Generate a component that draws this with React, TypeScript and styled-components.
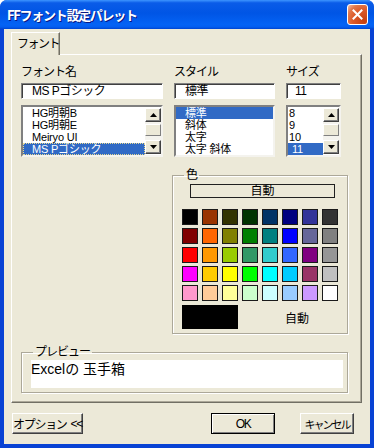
import React from "react";
import styled, { createGlobalStyle } from "styled-components";

const UI = `"Liberation Sans", "Noto Sans CJK JP", sans-serif`;

const GlobalStyle = createGlobalStyle`
  html, body { margin: 0; padding: 0; background: #ffffff; }
  body { font-family: ${UI}; }
  * { box-sizing: border-box; }
  fieldset { margin: 0; min-width: 0; }
`;

const Window = styled.div`
  width: 374px;
  height: 448px;
  display: flex;
  flex-direction: column;
  background: #0842d4;
  border-radius: 7px 7px 0 0;
  overflow: hidden;
`;

const TitleBar = styled.div`
  flex: none;
  height: 29px;
  display: flex;
  align-items: center;
  justify-content: space-between;
  padding: 0 6px 0 7px;
  background: linear-gradient(180deg, #3d95ff 0%, #0a5ce8 10%, #0055e5 45%, #0463f5 85%, #035ef0 93%, #0044d0 100%);
`;

const Title = styled.span`
  color: #ffffff;
  font: bold 13px "Noto Sans CJK JP", sans-serif;
  letter-spacing: -1.3px;
  line-height: 16px;
  text-shadow: 1px 1px 0 #0a1883;
`;

const CloseButton = styled.div`
  width: 21px;
  height: 21px;
  border: 1px solid #ffffff;
  border-radius: 3px;
  background: radial-gradient(circle at 85% 85%, #c43f10 0%, #dc5a2a 50%, #e2774a 75%, #f4b194 95%);
  display: flex;
  align-items: center;
  justify-content: center;
`;

const Body = styled.div`
  flex: 1;
  margin: 0 4px 4px;
  background: #ece9d8;
  display: flex;
  flex-direction: column;
  padding: 3px 8px 10px 7px;
`;

const TabStrip = styled.div`
  height: 23px;
  margin-bottom: -1px;
  display: flex;
  position: relative;
  z-index: 1;
`;

const Tab = styled.div`
  width: 49px;
  height: 23px;
  background: #ece9d8;
  border: 1px solid;
  border-color: #ffffff #716f64 transparent #ffffff;
  border-bottom: none;
  box-shadow: inset -1px 0 0 #aca899;
  font-size: 12px;
  letter-spacing: -1.5px;
  padding: 3px 0 0 5px;
  line-height: 16px;
  color: #000;
`;

const Panel = styled.div`
  height: 349px;
  border: 1px solid;
  border-color: #ffffff #716f64 #716f64 #ffffff;
  box-shadow: inset -1px -1px 0 #aca899;
  padding: 10px 13px 0 9px;
  display: flex;
  flex-direction: column;
`;

const FieldGrid = styled.div`
  display: grid;
  grid-template-columns: 142px 101px 55px;
  column-gap: 11px;
`;

const Field = styled.div`
  display: flex;
  flex-direction: column;
`;

const Label = styled.div`
  height: 14px;
  line-height: 14px;
  font-size: 12px;
  letter-spacing: -1px;
  color: #000;
`;

const TextBox = styled.div<{ $indent: number }>`
  margin-top: 4px;
  height: 16px;
  background: #fff;
  border: 1px solid;
  border-color: #808080 #ffffff #ffffff #808080;
  box-shadow: inset 1px 1px 0 #404040;
  padding-left: ${(p) => p.$indent}px;
  font-size: 12px;
  line-height: 14px;
  letter-spacing: -0.5px;
  color: #000;
  white-space: nowrap;
`;

const ListBox = styled.div`
  margin-top: 6px;
  height: 52px;
  background: #fff;
  border: 2px solid;
  border-color: #808080 #f4f3ee #f4f3ee #808080;
  display: flex;
`;

const Items = styled.div`
  flex: 1;
  display: flex;
  flex-direction: column;
`;

const Item = styled.div<{ $indent: number; $selected?: boolean; $focus?: boolean }>`
  height: 12px;
  line-height: 12px;
  font-size: 11px;
  letter-spacing: -0.2px;
  padding-left: ${(p) => p.$indent}px;
  white-space: nowrap;
  overflow: hidden;
  color: ${(p) => (p.$selected ? "#fff" : "#000")};
  background: ${(p) => (p.$selected ? "#316ac5" : "transparent")};
  outline: ${(p) => (p.$focus ? "1px dotted #e8d890" : "none")};
  outline-offset: -1px;
`;

const ScrollBar = styled.div`
  width: 16px;
  display: flex;
  flex-direction: column;
  padding: 1px 0;
`;

const ScrollButton = styled.div`
  height: 14px;
  background: #ece9d8;
  border: 1px solid;
  border-color: #ffffff #404040 #404040 #ffffff;
  box-shadow: inset -1px -1px 0 #808080;
  display: flex;
  align-items: center;
  justify-content: center;
`;

const Track = styled.div`
  flex: 1;
  background: #f4f3ee;
  padding-top: 2px;
`;

const Thumb = styled.div`
  height: 12px;
  background: #ece9d8;
  border: 1px solid;
  border-color: #ffffff #808080 #808080 #ffffff;
`;

const ColorGroup = styled.fieldset`
  align-self: flex-end;
  width: 176px;
  margin-top: 11px;
  border: 1px solid #aca899;
  box-shadow: 1px 1px 0 #fff, inset 1px 1px 0 #fff;
  padding: 2px 8px 4px 9px;
  display: flex;
  flex-direction: column;
`;

const GroupLegend = styled.legend`
  font-size: 12px;
  line-height: 14px;
  letter-spacing: -1px;
  padding: 0 2px;
  margin-left: 2px;
  color: #000;
`;

const AutoButton = styled.div`
  margin-left: 8px;
  width: 145px;
  height: 14px;
  border: 1px solid #202020;
  font-size: 12px;
  line-height: 12px;
  text-align: center;
  color: #000;
`;

const SwatchGrid = styled.div`
  margin-top: 11px;
  display: grid;
  grid-template-columns: repeat(8, 16px);
  grid-auto-rows: 16px;
  column-gap: 4px;
  row-gap: 3px;
`;

const Swatch = styled.div<{ $color: string }>`
  border: 1px solid #1a1a1a;
  background: ${(p) => p.$color};
`;

const CurrentRow = styled.div`
  margin-top: 4px;
  display: flex;
  align-items: center;
`;

const CurrentColor = styled.div`
  width: 56px;
  height: 24px;
  background: #000;
`;

const CurrentText = styled.span`
  margin-left: 47px;
  font-size: 12px;
  color: #000;
`;

const PreviewGroup = styled.fieldset`
  margin-top: 11px;
  border: 1px solid #aca899;
  box-shadow: 1px 1px 0 #fff, inset 1px 1px 0 #fff;
  padding: 1px 4px 4px 9px;
`;

const PreviewBox = styled.div`
  height: 28px;
  background: #fff;
  font-size: 14px;
  line-height: 18px;
  color: #000;
`;

const ButtonRow = styled.div`
  margin-top: 10px;
  height: 21px;
  display: flex;
  padding: 0 8px 0 1px;
`;

const Button = styled.div<{ $width: number; $default?: boolean; $push?: "auto" | number; $tight?: boolean }>`
  width: ${(p) => p.$width}px;
  height: 21px;
  margin-left: ${(p) => (p.$push === "auto" ? "auto" : `${p.$push ?? 0}px`)};
  background: #ece9d8;
  border: 1px solid;
  border-color: ${(p) => (p.$default ? "#000" : "#ffffff #404040 #404040 #ffffff")};
  box-shadow: ${(p) =>
    p.$default ? "inset 1px 1px 0 #fff, inset -1px -1px 0 #808080" : "inset -1px -1px 0 #808080"};
  display: flex;
  align-items: center;
  justify-content: center;
  gap: 4px;
  font-size: ${(p) => (p.$tight ? 11 : 12)}px;
  letter-spacing: ${(p) => (p.$tight ? -2 : -1.3)}px;
  color: #000;
  white-space: nowrap;
`;

const palette = [
  "#000000", "#993300", "#333300", "#003300", "#003366", "#000080", "#333399", "#333333",
  "#800000", "#FF6600", "#808000", "#008000", "#008080", "#0000FF", "#666699", "#808080",
  "#FF0000", "#FF9900", "#99CC00", "#339966", "#33CCCC", "#3366FF", "#800080", "#969696",
  "#FF00FF", "#FFCC00", "#FFFF00", "#00FF00", "#00FFFF", "#00CCFF", "#993366", "#C0C0C0",
  "#FF99CC", "#FFCC99", "#FFFF99", "#CCFFCC", "#CCFFFF", "#99CCFF", "#CC99FF", "#FFFFFF",
];

const Arrow = ({ up }: { up?: boolean }) => (
  <svg width="7" height="4" viewBox="0 0 7 4">
    <polygon points={up ? "0,4 7,4 3.5,0" : "0,0 7,0 3.5,4"} fill="#000" />
  </svg>
);

const Scroll = () => (
  <ScrollBar>
    <ScrollButton>
      <Arrow up />
    </ScrollButton>
    <Track>
      <Thumb />
    </Track>
    <ScrollButton>
      <Arrow />
    </ScrollButton>
  </ScrollBar>
);

export default function App() {
  return (
    <>
      <GlobalStyle />
      <Window>
        <TitleBar>
          <Title>FFフォント設定パレット</Title>
          <CloseButton>
            <svg width="11" height="11" viewBox="0 0 11 11">
              <path d="M1.5 1.5 L9.5 9.5 M9.5 1.5 L1.5 9.5" stroke="#fff" strokeWidth="2" strokeLinecap="square" />
            </svg>
          </CloseButton>
        </TitleBar>
        <Body>
          <TabStrip>
            <Tab>フォント</Tab>
          </TabStrip>
          <Panel>
            <FieldGrid>
              <Field>
                <Label>フォント名</Label>
                <TextBox $indent={10}>MS Pゴシック</TextBox>
                <ListBox>
                  <Items>
                    <Item $indent={9}>HG明朝B</Item>
                    <Item $indent={9}>HG明朝E</Item>
                    <Item $indent={9}>Meiryo UI</Item>
                    <Item $indent={9} $selected $focus>MS Pゴシック</Item>
                  </Items>
                  <Scroll />
                </ListBox>
              </Field>
              <Field>
                <Label>スタイル</Label>
                <TextBox $indent={10}>標準</TextBox>
                <ListBox>
                  <Items>
                    <Item $indent={9} $selected>標準</Item>
                    <Item $indent={9}>斜体</Item>
                    <Item $indent={9}>太字</Item>
                    <Item $indent={9}>太字 斜体</Item>
                  </Items>
                </ListBox>
              </Field>
              <Field>
                <Label>サイズ</Label>
                <TextBox $indent={8}>11</TextBox>
                <ListBox>
                  <Items>
                    <Item $indent={1}>8</Item>
                    <Item $indent={1}>9</Item>
                    <Item $indent={1}>10</Item>
                    <Item $indent={4} $selected>11</Item>
                  </Items>
                  <Scroll />
                </ListBox>
              </Field>
            </FieldGrid>
            <ColorGroup>
              <GroupLegend>色</GroupLegend>
              <AutoButton>自動</AutoButton>
              <SwatchGrid>
                {palette.map((c) => (
                  <Swatch key={c} $color={c} />
                ))}
              </SwatchGrid>
              <CurrentRow>
                <CurrentColor />
                <CurrentText>自動</CurrentText>
              </CurrentRow>
            </ColorGroup>
            <PreviewGroup>
              <GroupLegend>プレビュー</GroupLegend>
              <PreviewBox>Excelの 玉手箱</PreviewBox>
            </PreviewGroup>
          </Panel>
          <ButtonRow>
            <Button $width={71}>
              <span>オプション</span>
              <span>&lt;&lt;</span>
            </Button>
            <Button $width={64} $default $push="auto">OK</Button>
            <Button $width={54} $push={25} $tight>キャンセル</Button>
          </ButtonRow>
        </Body>
      </Window>
    </>
  );
}
